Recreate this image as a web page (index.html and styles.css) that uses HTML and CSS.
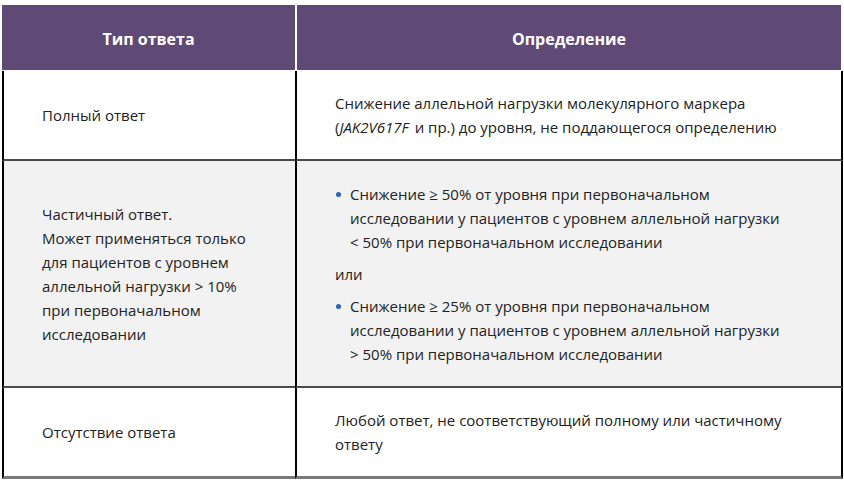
FILE: index.html
```html
<!DOCTYPE html>
<html lang="ru">
<head>
<meta charset="utf-8">
<title>Тип ответа</title>
<link rel="stylesheet" href="styles.css">
</head>
<body>
<div class="table">
  <div class="head head-left">Тип ответа</div>
  <div class="head head-right">Определение</div>

  <div class="cell left row1">Полный ответ</div>
  <div class="cell right row1"><p>Снижение аллельной нагрузки молекулярного маркера <span class="nowrap">(<i class="gene">JAK2V617F</i></span> и&nbsp;пр.) до уровня, не поддающегося определению</p></div>

  <div class="cell left row2 shade">Частичный ответ.<br>Может применяться только для пациентов с уровнем аллельной нагрузки &gt;&nbsp;10% при первоначальном исследовании</div>
  <div class="cell right row2 shade">
    <div class="defs">
      <ul class="list"><li>Снижение ≥&nbsp;50% от уровня при первоначальном исследовании у пациентов с уровнем аллельной нагрузки &lt;&nbsp;50% при первоначальном исследовании</li></ul>
      <p class="or">или</p>
      <ul class="list"><li>Снижение ≥&nbsp;25% от уровня при первоначальном исследовании у пациентов с уровнем аллельной нагрузки &gt;&nbsp;50% при первоначальном исследовании</li></ul>
    </div>
  </div>

  <div class="cell left row3 last">Отсутствие ответа</div>
  <div class="cell right row3 last"><p>Любой ответ, не соответствующий полному или частичному ответу</p></div>
</div>
</body>
</html>
```

FILE: styles.css
```css
html, body {
  margin: 0;
  padding: 0;
  background: #ffffff;
}

body {
  font-family: "Open Sans", "Noto Sans", sans-serif;
  font-size: 15px;
  line-height: 24px;
  color: #222222;
}

.table {
  display: grid;
  grid-template-columns: 293px 548px;
  margin: 5px 0 0 2px;
  width: 841px;
}

.head {
  height: 65px;
  background: #5f4977;
  color: #ffffff;
  font-weight: 700;
  font-size: 16px;
  display: flex;
  align-items: center;
  justify-content: center;
  padding-top: 3px;
  box-sizing: border-box;
  margin-bottom: 1px;
}

.head-right {
  border-left: 2px solid #ffffff;
  border-right: 2px solid #ffffff;
}

.cell {
  display: flex;
  align-items: center;
  box-sizing: border-box;
  padding: 20px 36px 20px 38px;
  border-left: 2px solid #000000;
  border-bottom: 2px solid #4a4a4a;
}

.cell.right {
  padding-left: 38px;
  padding-right: 40px;
  border-right: 2px solid #000000;
}

.cell p {
  margin: 0;
}

.nowrap {
  white-space: nowrap;
}

.gene {
  padding-right: 2px;
}

.row1 { min-height: 90px; }
.row2 { min-height: 227px; }
.row3 { min-height: 90px; }

.shade {
  background: #f2f2f2;
}

.last {
  border-bottom: 3px solid #7a7a7a;
}

.defs {
  display: flex;
  flex-direction: column;
  gap: 8px;
}

.list {
  margin: 0;
  padding: 0 0 0 15px;
  list-style: none;
}

.list li {
  position: relative;
}

.list li::before {
  content: "";
  position: absolute;
  left: -14px;
  top: 10px;
  width: 5px;
  height: 5px;
  border-radius: 50%;
  background: #2563b8;
}

.or {
  margin: 0;
}
```
